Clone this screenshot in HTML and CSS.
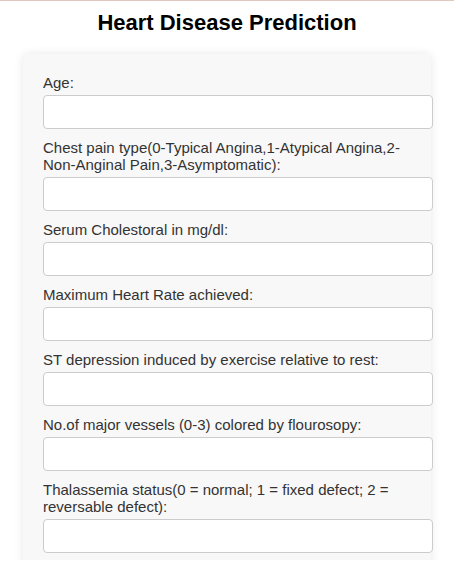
FILE: index.html
```html
<!DOCTYPE html>
<html lang="en">
<head>
<meta charset="utf-8">
<title>Heart Disease Prediction</title>
<link rel="stylesheet" href="styles.css">
</head>
<body>
<div class="topline"></div>
<div class="page">
  <h1 class="title">Heart Disease Prediction</h1>
  <form class="card">
    <label class="field-label" for="age">Age:</label>
    <input class="field-input" id="age" type="text">
    <label class="field-label" for="cp">Chest pain type(0-Typical Angina,1-Atypical Angina,2-Non-Anginal Pain,3-Asymptomatic):</label>
    <input class="field-input" id="cp" type="text">
    <label class="field-label" for="chol">Serum Cholestoral in mg/dl:</label>
    <input class="field-input" id="chol" type="text">
    <label class="field-label" for="thalach">Maximum Heart Rate achieved:</label>
    <input class="field-input" id="thalach" type="text">
    <label class="field-label" for="oldpeak">ST depression induced by exercise relative to rest:</label>
    <input class="field-input" id="oldpeak" type="text">
    <label class="field-label" for="ca">No.of major vessels (0-3) colored by flourosopy:</label>
    <input class="field-input" id="ca" type="text">
    <label class="field-label" for="thal">Thalassemia status(0 = normal; 1 = fixed defect; 2 = reversable defect):</label>
    <input class="field-input" id="thal" type="text">
  </form>
</div>
</body>
</html>
```
FILE: styles.css
```css
html, body {
  margin: 0;
  padding: 0;
  background: #ffffff;
}
body {
  font-family: "Liberation Sans", Arial, sans-serif;
  width: 454px;
}
.topline {
  height: 1px;
  background: #e2c6c0;
}
.page {
  height: 559px;
  overflow: hidden;
  padding-top: 9px;
  box-sizing: border-box;
}
.title {
  margin: 0 0 18px 0;
  font-size: 22px;
  font-weight: bold;
  text-align: center;
  color: #000;
  line-height: normal;
}
.card {
  width: 368px;
  margin: 0 auto;
  padding: 20px;
  background: #f8f8f8;
  border-radius: 6px;
  box-shadow: 0 0 10px rgba(0, 0, 0, 0.1);
}
.field-label {
  display: block;
  font-size: 15px;
  line-height: normal;
  color: #333;
  margin-bottom: 4px;
}
.field-input {
  display: block;
  width: 100%;
  height: 32px;
  padding: 0 10px;
  margin: 0 0 10px 0;
  border: 1px solid #ccc;
  border-radius: 4px;
  background: #fff;
  font-size: 15px;
  font-family: inherit;
}
```
